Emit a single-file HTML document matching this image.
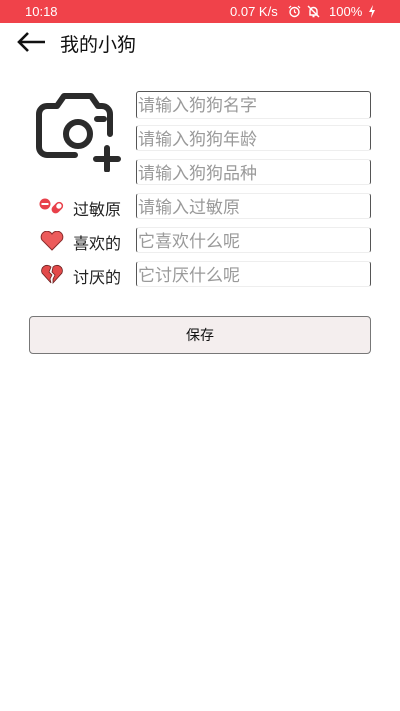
<!DOCTYPE html>
<html><head><meta charset="utf-8"><style>
*{margin:0;padding:0;box-sizing:border-box}
body{width:400px;height:711px;background:#fff;font-family:"Liberation Sans","Noto Sans CJK SC",sans-serif;position:relative;overflow:hidden}
.sb{position:absolute;left:0;top:0;width:400px;height:23px;background:#f0424a;color:#fff;font-size:13px}
.sb span{position:absolute;top:4px}
.title{position:absolute;left:60px;top:30px;font-size:19px;color:#111}
.inp{position:absolute;left:136px;width:235px;height:26px;border-left:1px solid #555;border-right:1px solid #555;border-top:1px solid #eee;border-bottom:1px solid #eee;border-radius:3px;font-size:17px;color:#9a9a9a;line-height:28px;padding-left:1px}
.lbl{position:absolute;left:73px;font-size:16px;color:#222}
.btn{position:absolute;left:29px;top:316px;width:342px;height:38px;background:#f4eeee;border:1px solid #777;border-radius:4px;text-align:center;line-height:36px;font-size:14px;color:#111}
</style></head><body>
<div class="sb"><span style="left:25px">10:18</span><span style="left:230px">0.07 K/s</span>
<svg style="position:absolute;left:288px;top:5px" width="13" height="13" viewBox="0 0 13 13"><circle cx="6.5" cy="7" r="4.5" fill="none" stroke="#fff" stroke-width="1.4"/><path d="M6.5 4.5v2.5l1.5 1M1 3l2-2M12 3l-2-2" stroke="#fff" stroke-width="1.2" fill="none"/></svg>
<svg style="position:absolute;left:307px;top:5px" width="13" height="13" viewBox="0 0 13 13"><path d="M3 10V6a3.5 3.5 0 0 1 7 0v4zM5.5 11.5h2M1 1l11 11" stroke="#fff" stroke-width="1.4" fill="none"/></svg>
<span style="left:329px">100%</span>
<svg style="position:absolute;left:368px;top:5px" width="8" height="13" viewBox="0 0 8 13"><path d="M5 0L1 7h3l-1 6 4-8H4z" fill="#fff"/></svg>
</div>
<svg style="position:absolute;left:16px;top:31px" width="30" height="22" viewBox="0 0 30 22"><path d="M29 11H3M12 2L3 11l9 9" stroke="#111" stroke-width="2.6" fill="none"/></svg>
<div class="title">我的小狗</div>

<svg style="position:absolute;left:35px;top:90px" width="88" height="82" viewBox="0 0 88 82">
<path d="M40 65H12a8 8 0 0 1-8-8V24a8 8 0 0 1 8-8h10l7-10h27l7 10h4a8 8 0 0 1 8 8v20" fill="none" stroke="#2b2b2b" stroke-width="6" stroke-linecap="round" stroke-linejoin="round"/>
<circle cx="43" cy="44" r="12" fill="none" stroke="#2b2b2b" stroke-width="6"/>
<path d="M62 29h7M72 58v22M61 69h22" stroke="#2b2b2b" stroke-width="6" stroke-linecap="round"/>
</svg>

<div class="inp" style="top:91px;height:28px;border-top-color:#555">请输入狗狗名字</div>
<div class="inp" style="top:125px">请输入狗狗年龄</div>
<div class="inp" style="top:159px">请输入狗狗品种</div>
<div class="inp" style="top:193px">请输入过敏原</div>
<div class="inp" style="top:227px">它喜欢什么呢</div>
<div class="inp" style="top:261px">它讨厌什么呢</div>

<svg style="position:absolute;left:39px;top:197px" width="26" height="20" viewBox="0 0 26 20"><circle cx="6" cy="7" r="5.5" fill="#e8404a"/><rect x="2.5" y="6" width="7" height="2" fill="#fff"/><g transform="rotate(-45 18 11)"><rect x="12" y="7" width="13" height="8" rx="4" fill="#e8404a"/><rect x="18" y="8.5" width="5.5" height="5" rx="2.5" fill="#fff"/></g></svg>
<div class="lbl" style="top:196px">过敏原</div>
<svg style="position:absolute;left:40px;top:231px" width="24" height="20" viewBox="0 0 24 20"><path d="M12 19L2 9a5.5 5.5 0 0 1 10-6 5.5 5.5 0 0 1 10 6z" fill="#ec5b5b" stroke="#8a2a2a" stroke-width="1"/></svg>
<div class="lbl" style="top:230px">喜欢的</div>
<svg style="position:absolute;left:40px;top:264px" width="24" height="22" viewBox="0 0 24 22"><path d="M11 19L2 9a5.5 5.5 0 0 1 9-6l-2 5 3 3-2 4zM13 19l9-10a5.5 5.5 0 0 0-9-6l-1 5 3 3-2 4z" fill="#e24a4a" stroke="#6a2020" stroke-width="0.8"/></svg>
<div class="lbl" style="top:264px">讨厌的</div>

<div class="btn">保存</div>
</body></html>
